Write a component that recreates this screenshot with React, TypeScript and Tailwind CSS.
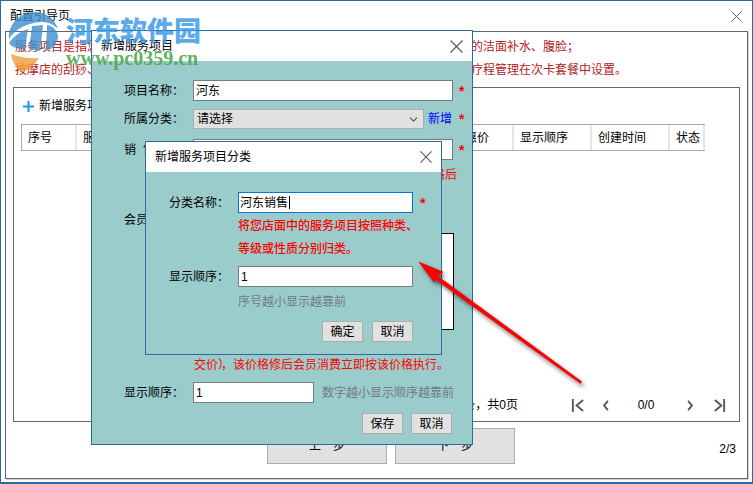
import type { ReactNode } from 'react'
import { ChevronDown } from 'lucide-react'

const CJK = "font-['Liberation_Sans','Noto_Sans_CJK_SC',sans-serif]"

const COLUMNS = [
  { label: '序号', width: 'w-[55px]' },
  { label: '服务项目名称', width: 'w-[158px]' },
  { label: '所属分类', width: 'w-[78px]' },
  { label: '销售价', width: 'w-[70px]' },
  { label: '会员价', width: 'w-[64px]' },
  { label: '优惠价', width: 'w-[67px]' },
  { label: '显示顺序', width: 'w-[78px]' },
  { label: '创建时间', width: 'w-[78px]' },
  { label: '状态', width: 'w-[35px]' },
]

function CloseIcon({ className }: { className?: string }) {
  return (
    <svg viewBox="0 0 13 13" className={className} fill="none" stroke="#555" strokeWidth="1.1">
      <path d="M.5.5l12 12M12.5.5l-12 12" />
    </svg>
  )
}

function Star({ className = '' }: { className?: string }) {
  return <span className={`text-[14px] leading-none font-bold text-[#ff0000] ${className}`}>*</span>
}

function Btn({ children, className = '' }: { children: ReactNode; className?: string }) {
  return (
    <div
      className={`flex items-center justify-center border border-[#adadad] bg-[#e1e1e1] text-[12px] text-black ${className}`}
    >
      {children}
    </div>
  )
}

function Field({ children, className = '' }: { children?: ReactNode; className?: string }) {
  return (
    <div className={`flex items-center border border-[#7a7a7a] bg-white pl-[1px] text-[12px] text-black ${className}`}>
      {children}
    </div>
  )
}

function PagerIcon({ kind }: { kind: 'first' | 'prev' | 'next' | 'last' }) {
  const paths = {
    first: 'M2 1v14M13 2L6 8l7 6',
    prev: 'M6 3L2 8l4 5',
    next: 'M2 3l4 5-4 5',
    last: 'M12 1v14M2 2l7 6-7 6',
  }
  const wide = kind === 'first' || kind === 'last'
  return (
    <svg viewBox={wide ? '0 0 14 16' : '0 0 8 16'} className={wide ? 'h-[15px] w-[13px]' : 'h-[15px] w-[8px]'} fill="none" stroke="#555" strokeWidth="2">
      <path d={paths[kind]} />
    </svg>
  )
}

function Watermark() {
  return (
    <div className="pointer-events-none absolute top-0 left-0 flex">
      <svg viewBox="0 0 60 75" className="h-[75px] w-[60px] opacity-80">
        <path d="M8 38C7 22 20 11 33 11c12 0 21 7 24 17-7-7-15-8-24-6-11 2-20 8-25 16z" fill="#3d8fd1" />
        <path d="M8 42c4-6 10-11 19-14l-3 20c-8 0-13-2-16-6z" fill="#3d8fd1" />
        <path d="M31 25l11-1-3 26-11-2z" fill="#3d8fd1" />
        <path d="M46 24c6 1 10 5 11 11 0 7-5 13-12 15z" fill="#3d8fd1" />
        <path d="M10 53c8 3 18 5 28 4-5 8-12 13-18 14-5-4-9-11-10-18z" fill="#f59b3c" />
      </svg>
      <div className="ml-[5px] flex flex-col">
        <div className="mt-[13px] font-['Noto_Sans_CJK_SC',sans-serif] text-[27px] leading-[32px] font-black text-[#3d9be6]/85">
          河东软件园
        </div>
        <div className="mt-[1px] font-['Liberation_Serif',serif] text-[20px] leading-[22px] font-bold whitespace-nowrap text-[#4ea84e]/90">
          www.pc0359.cn
        </div>
      </div>
    </div>
  )
}

function Arrow() {
  return (
    <svg viewBox="0 0 753 484" className="pointer-events-none absolute top-[-1px] left-[-1px] h-[484px] w-[753px]">
      <polygon
        points="419,262 443,272 437.5,276 581.5,381.5 580.5,383.5 435,279 434,282"
        fill="#ff0000"
        stroke="#e00000"
        strokeWidth="0.6"
        className="drop-shadow-[2px_3px_2px_rgba(0,0,0,0.55)]"
      />
    </svg>
  )
}

function ServiceDialog() {
  return (
    <div className="absolute top-[29px] left-[90px] flex h-[415px] w-[382px] flex-col border border-[#2d6aa0] bg-[#9bcccc] text-[12px] text-black">
      <div className="flex h-[30px] shrink-0 items-center justify-between bg-white pr-[9px] pl-[9px]">
        <span>新增服务项目</span>
        <CloseIcon className="h-[13px] w-[13px]" />
      </div>
      <div className="flex flex-1 flex-col pl-[32px]">
        <div className="mt-[19px] flex h-[21px] items-center">
          <span className="w-[69px]">项目名称：</span>
          <Field className="h-[21px] w-[260px] pl-[2px]">河东</Field>
          <Star className="ml-[6px]" />
        </div>
        <div className="mt-[8px] flex h-[20px] items-center">
          <span className="w-[69px]">所属分类：</span>
          <div className="flex h-[20px] w-[231px] items-center justify-between border border-[#adadad] bg-[#e1e1e1] pr-[3px] pl-[3px]">
            <span>请选择</span>
            <ChevronDown className="h-[13px] w-[13px] text-[#555]" />
          </div>
          <span className="ml-[4px] text-[#0000ff]">新增</span>
          <Star className="ml-[7px]" />
        </div>
        <div className="mt-[10px] flex h-[21px] items-center">
          <span className="w-[69px]">销<span className="ml-[7px]">售</span></span>
          <Field className="h-[21px] w-[260px]" />
          <Star className="ml-[6px]" />
        </div>
        <div className="mt-[6px] w-[333px] text-right text-[#ff0000]">填写优惠价格后</div>
        <div className="mt-[27px] flex">
          <span className="w-[69px]">会员价格：</span>
        </div>
        <div className="mt-[4px] ml-[69px] h-[97px] w-[261px] border border-black bg-white" />
        <div className="mt-[26px] ml-[70px] whitespace-nowrap text-[#ff0000]">
          交价<span className="tracking-[-3px]">），</span><span className="ml-[3px]">该价格修后会员消费立即按该价格执行。</span>
        </div>
        <div className="mt-[8px] flex h-[21px] items-center">
          <span className="w-[69px]">显示顺序：</span>
          <Field className="h-[21px] w-[121px] pl-[2px]">1</Field>
          <span className="ml-[8px] text-[#6e7c7c]">数字越小显示顺序越靠前</span>
        </div>
        <div className="mt-[10px] flex justify-end gap-[8px] pr-[20px]">
          <Btn className="h-[21px] w-[41px]">保存</Btn>
          <Btn className="h-[21px] w-[41px]">取消</Btn>
        </div>
      </div>
    </div>
  )
}

function CategoryDialog() {
  return (
    <div className="absolute top-[140px] left-[144px] flex h-[214px] w-[297px] flex-col border border-[#2d6aa0] bg-[#9bcccc] text-[12px] text-black">
      <div className="flex h-[30px] shrink-0 items-center justify-between bg-white pr-[9px] pl-[9px]">
        <span>新增服务项目分类</span>
        <CloseIcon className="h-[12px] w-[12px]" />
      </div>
      <div className="flex flex-1 flex-col pl-[23px]">
        <div className="mt-[20px] flex h-[21px] items-center">
          <span className="w-[69px]">分类名称：</span>
          <div className="flex h-[21px] w-[175px] items-center border border-[#0078d7] bg-white pl-[1px]">
            河东销售<span className="ml-[1px] h-[13px] w-px bg-black" />
          </div>
          <Star className="ml-[7px]" />
        </div>
        <div className="mt-[2px] ml-[69px] leading-[23px] font-medium text-[#ff0000]">
          <div>将您店面中的服务项目按照种类、</div>
          <div>等级或性质分别归类。</div>
        </div>
        <div className="mt-[5px] flex h-[21px] items-center">
          <span className="w-[69px]">显示顺序：</span>
          <Field className="h-[21px] w-[175px] pl-[2px]">1</Field>
        </div>
        <div className="mt-[6px] ml-[69px] text-[#6e7c7c]">序号越小显示越靠前</div>
        <div className="mt-[10px] ml-[153px] flex gap-[9px]">
          <Btn className="h-[21px] w-[41px]">确定</Btn>
          <Btn className="h-[21px] w-[41px]">取消</Btn>
        </div>
      </div>
    </div>
  )
}

export default function App() {
  return (
    <div className={`relative flex h-[484px] w-[753px] flex-col overflow-hidden border border-b-2 border-[#2d6aa0] bg-white text-[12px] text-black ${CJK}`}>
      <div className="flex h-[30px] shrink-0 items-center justify-between pr-[10px] pl-[9px]">
        <span>配置引导页</span>
        <CloseIcon className="h-[11px] w-[11px]" />
      </div>

      <div className="mx-[4px] mb-[3px] flex flex-1 flex-col border border-[#666] shadow-[1px_1px_0_#d0d0d0]">
        <div className="mt-[4px] pl-[9px] leading-[23px] whitespace-nowrap text-[#b22222]">
          <div>服务项目是指您店面中向顾客提供的各种服务内容，比如美容店里常见的面部护理项目的洁面补水、腹脸；</div>
          <div>按摩店的刮痧、拔罐、足疗等项目，其中按次或按疗程消费的服务项目，请将其单独的疗程管理在次卡套餐中设置。</div>
        </div>

        <div className="mx-[7px] mt-[5px] flex h-[335px] flex-col border border-[#666] px-[7px]">
          <div className="flex h-[36px] items-center gap-[5px] pl-[2px]">
            <svg viewBox="0 0 11 11" className="h-[11px] w-[11px]" fill="none" stroke="#1a9be0" strokeWidth="2">
              <path d="M5.5 0v11M0 5.5h11" />
            </svg>
            <span>新增服务项目</span>
          </div>
          <div className="flex h-[27px] w-[684px] border-y border-l border-[#a8a8a8]">
            {COLUMNS.map((c) => (
              <div key={c.label} className={`flex items-center border-r-2 border-[#e6e6e6] pl-[6px] ${c.width}`}>
                {c.label}
              </div>
            ))}
          </div>
          <div className="flex-1" />
          <div className="mb-[6px] flex h-[20px] items-center justify-between pr-[6px]">
            <span className="ml-auto">共0条，共0页</span>
            <div className="ml-[53px] flex items-center">
              <PagerIcon kind="first" />
              <span className="ml-[18px]"><PagerIcon kind="prev" /></span>
              <span className="w-[76px] pr-[4px] text-center">0/0</span>
              <PagerIcon kind="next" />
              <span className="ml-[19px]"><PagerIcon kind="last" /></span>
            </div>
          </div>
        </div>

        <div className="relative mt-[6px] flex gap-[8px] pl-[261px]">
          <Btn className="h-[36px] w-[120px]">上一步</Btn>
          <Btn className="h-[36px] w-[120px]">下一步</Btn>
          <span className="absolute top-[12px] right-[11px]">2/3</span>
        </div>
      </div>

      <ServiceDialog />
      <CategoryDialog />
      <Arrow />
      <Watermark />
    </div>
  )
}
